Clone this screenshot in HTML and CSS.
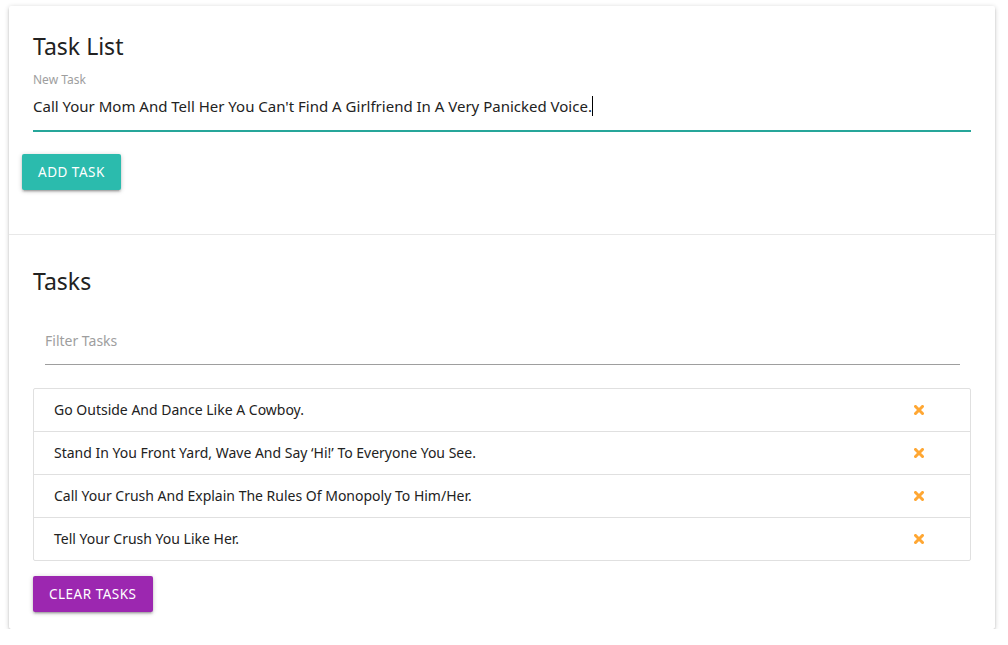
FILE: index.html
```html
<!DOCTYPE html>
<html>
<head>
<meta charset="utf-8">
<link rel="stylesheet" href="styles.css">
</head>
<body>
<div class="page">
  <div class="card">
    <section class="card-content top">
      <h2 class="card-title">Task List</h2>
      <div class="field">
        <label class="field-label">New Task</label>
        <div class="field-input focused">Call Your Mom And Tell Her You Can't Find A Girlfriend In A Very Panicked Voice.<span class="caret"></span></div>
      </div>
      <button class="btn btn-teal">ADD TASK</button>
    </section>
    <section class="card-content bottom">
      <h2 class="card-title">Tasks</h2>
      <div class="filter">
        <div class="filter-input">Filter Tasks</div>
      </div>
      <ul class="collection">
        <li class="item"><span>Go Outside And Dance Like A Cowboy.</span><span class="del"><svg viewBox="0 0 10 10" width="10" height="10"><path d="M1.5 1.5 L8.5 8.5 M8.5 1.5 L1.5 8.5" stroke="#ffa733" stroke-width="3" stroke-linecap="square"/></svg></span></li>
        <li class="item"><span>Stand In You Front Yard, Wave And Say ‘Hi!’ To Everyone You See.</span><span class="del"><svg viewBox="0 0 10 10" width="10" height="10"><path d="M1.5 1.5 L8.5 8.5 M8.5 1.5 L1.5 8.5" stroke="#ffa733" stroke-width="3" stroke-linecap="square"/></svg></span></li>
        <li class="item"><span>Call Your Crush And Explain The Rules Of Monopoly To Him/Her.</span><span class="del"><svg viewBox="0 0 10 10" width="10" height="10"><path d="M1.5 1.5 L8.5 8.5 M8.5 1.5 L1.5 8.5" stroke="#ffa733" stroke-width="3" stroke-linecap="square"/></svg></span></li>
        <li class="item"><span>Tell Your Crush You Like Her.</span><span class="del"><svg viewBox="0 0 10 10" width="10" height="10"><path d="M1.5 1.5 L8.5 8.5 M8.5 1.5 L1.5 8.5" stroke="#ffa733" stroke-width="3" stroke-linecap="square"/></svg></span></li>
      </ul>
      <button class="btn btn-purple">CLEAR TASKS</button>
    </section>
  </div>
</div>
</body>
</html>
```

FILE: styles.css
```css
* { box-sizing: border-box; }
html, body { margin: 0; padding: 0; background: #fff; }
body {
  font-family: "Noto Sans", "Open Sans", sans-serif;
  color: rgba(0,0,0,0.87);
}
.page { padding: 6px 13px 0 9px; }
.card {
  width: 986px;
  background: #fff;
  border-radius: 2px;
  box-shadow: 0 2px 2px 0 rgba(0,0,0,.14), 0 3px 1px -2px rgba(0,0,0,.12), 0 1px 5px 0 rgba(0,0,0,.2);
}
.card-content { padding: 24px; }
.card-content.top { height: 229px; border-bottom: 1px solid #e8e8e8; padding-top: 24px; }
.card-content.bottom { padding: 30px 24px 17px 24px; }
.card-title {
  margin: 0;
  font-size: 23px;
  line-height: 32px;
  font-weight: 400;
  color: #222;
}
.field { margin-top: 10px; }
.field-label {
  display: block;
  font-size: 12px;
  line-height: 16px;
  color: #9e9e9e;
}
.field-input {
  height: 44px;
  font-size: 15px;
  line-height: 36px;
  color: #222;
  border-bottom: 2px solid #26a69a;
  white-space: nowrap;
}
.caret {
  display: inline-block;
  width: 1px;
  height: 20px;
  background: #000;
  vertical-align: -4px;
}
.btn {
  display: inline-block;
  height: 36px;
  border: none;
  border-radius: 2px;
  padding: 0 16px;
  font-family: inherit;
  font-size: 13.5px;
  letter-spacing: .5px;
  color: #fff;
  box-shadow: 0 2px 2px 0 rgba(0,0,0,.14), 0 3px 1px -2px rgba(0,0,0,.12), 0 1px 5px 0 rgba(0,0,0,.2);
}
.btn-teal { background: #2bbbad; margin: 22px 0 0 -11px; }
.btn-purple { background: #9c27b0; margin-top: 15px; }
.filter { margin-top: 21px; padding: 0 11px 0 12px; }
.filter-input {
  height: 47px;
  font-size: 14px;
  line-height: 45px;
  color: #9e9e9e;
  border-bottom: 1px solid #9e9e9e;
}
.collection {
  list-style: none;
  margin: 23px 0 0 0;
  padding: 0;
  border: 1px solid #e0e0e0;
  border-radius: 2px;
}
.item {
  display: flex;
  justify-content: space-between;
  align-items: center;
  padding: 10px 20px;
  line-height: 22px;
  font-size: 14px;
  color: #222;
  border-bottom: 1px solid #e0e0e0;
}
.item:last-child { border-bottom: none; }
.del { display: flex; margin-right: 26px; }
```
